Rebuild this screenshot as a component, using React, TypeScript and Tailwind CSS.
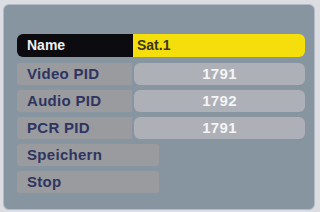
const rows = [
  { label: "Video PID", value: "1791" },
  { label: "Audio PID", value: "1792" },
  { label: "PCR PID", value: "1791" },
];

const font = { fontFamily: '"Liberation Sans", Arial, sans-serif' };

export default function App() {
  return (
    <div
      className="w-[320px] h-[212px] bg-[#dcdde3] pt-[4px] pl-[3px] overflow-hidden"
      style={font}
    >
      <div className="w-[312px] h-[206px] rounded-[6px] border border-[#b3bcc4] bg-[#8795a0] pt-[29px] pl-[13px] flex flex-col gap-[5px]">
        <div className="flex h-[23px] mb-[1px]">
          <div className="w-[116px] rounded-l-[6px] bg-[#0c0c10] pl-[10px] flex items-center text-[14px] font-bold text-[#eef0f4]">
            Name
          </div>
          <div className="w-[172px] rounded-r-[6px] bg-[#f4df0c] pl-[4px] flex items-center text-[14px] font-bold text-[#3a3520]">
            Sat.1
          </div>
        </div>
        {rows.map((r) => (
          <div key={r.label} className="flex h-[22px] gap-[2px]">
            <div className="w-[115px] rounded-l-[3px] bg-[#999b9f] pl-[10px] flex items-center text-[15px] font-bold tracking-[0.3px] text-[#2f3460]">
              {r.label}
            </div>
            <div className="w-[171px] rounded-[6px] bg-[#adb0b6] flex items-center justify-center text-[15px] font-bold tracking-[0.3px] text-[#f4f4f6]">
              {r.value}
            </div>
          </div>
        ))}
        {["Speichern", "Stop"].map((l) => (
          <div
            key={l}
            className="w-[142px] h-[22px] rounded-[3px] bg-[#999b9f] pl-[10px] flex items-center text-[15px] font-bold tracking-[0.3px] text-[#2f3460]"
          >
            {l}
          </div>
        ))}
      </div>
    </div>
  );
}
